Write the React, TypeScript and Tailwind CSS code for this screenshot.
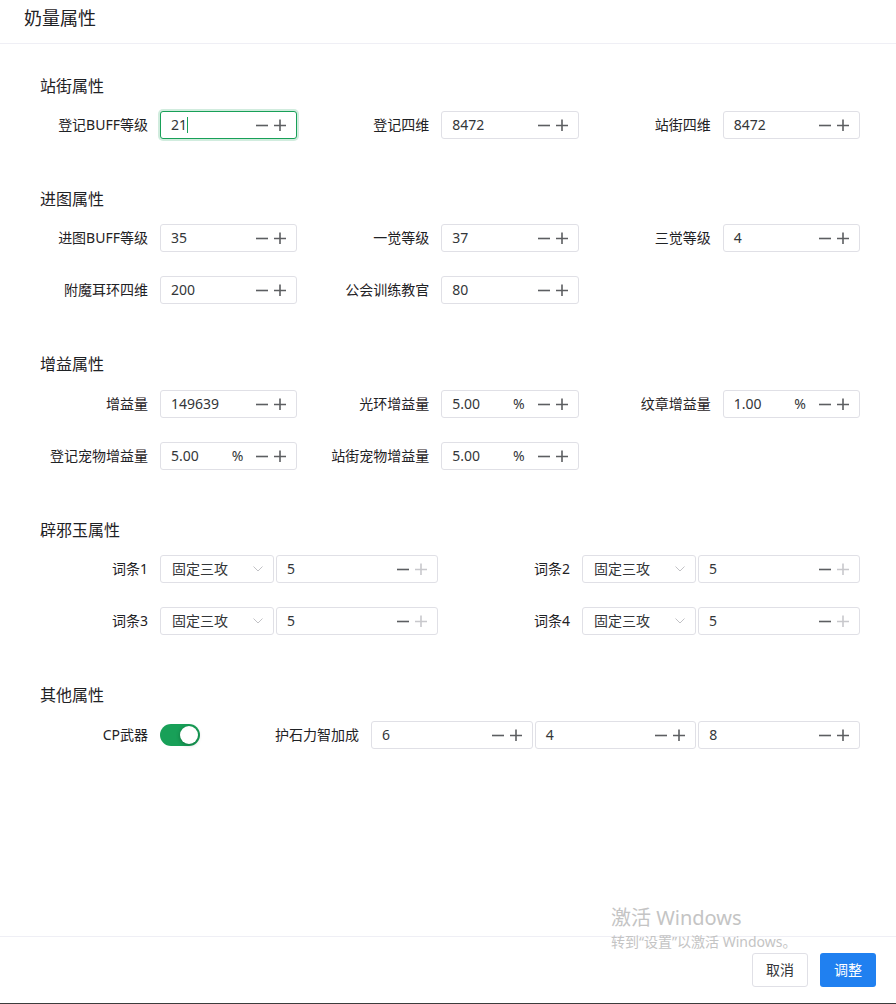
import React from "react";

const font = "font-['Noto_Sans','Noto_Sans_CJK_SC',sans-serif]";

function Minus({ disabled }: { disabled?: boolean }) {
  return (
    <span className="flex w-[18px] items-center justify-center">
      <svg width="12" height="12" viewBox="0 0 12 12">
        <path d="M0 6.5H12" stroke={disabled ? "#c8c8cc" : "#5c5e61"} strokeWidth="1.6" />
      </svg>
    </span>
  );
}

function Plus({ disabled }: { disabled?: boolean }) {
  return (
    <span className="flex w-[18px] items-center justify-center">
      <svg width="12" height="12" viewBox="0 0 12 12">
        <path d="M0 6.5H12M6 0.5V12.5" stroke={disabled ? "#c8c8cc" : "#5c5e61"} strokeWidth="1.6" />
      </svg>
    </span>
  );
}

function NumberInput({
  value,
  suffix,
  focused,
  maxed,
  className = "",
}: {
  value: string;
  suffix?: string;
  focused?: boolean;
  maxed?: boolean;
  className?: string;
}) {
  return (
    <div
      className={
        "flex h-7 min-w-0 items-center rounded-[3px] border bg-white pl-[10px] pr-[7px] text-sm text-[#333639] " +
        (focused
          ? "border-[#18a058] shadow-[0_0_0_2px_rgba(24,160,88,0.2)] "
          : "border-[#e0e0e6] ") +
        className
      }
    >
      <span className="flex flex-1 items-center leading-5">
        {value}
        {focused && <span className="inline-block h-4 w-px bg-[#18a058]" />}
      </span>
      {suffix && <span className="mr-[10px] leading-5">{suffix}</span>}
      <Minus />
      <Plus disabled={maxed} />
    </div>
  );
}

function Select({ value }: { value: string }) {
  return (
    <div className="flex h-7 w-[114px] shrink-0 items-center rounded-[3px] border border-[#e0e0e6] bg-white pl-[11px] pr-[10px] text-sm text-[#333639]">
      <span className="flex-1 leading-5">{value}</span>
      <svg width="10" height="6" viewBox="0 0 10 6">
        <path d="M0.5 0.5L5 5L9.5 0.5" fill="none" stroke="#c2c2c6" strokeWidth="1" />
      </svg>
    </div>
  );
}

function Field({ label, children }: { label: string; children: React.ReactNode }) {
  return (
    <div className="flex h-7 items-center">
      <div className="w-[144px] shrink-0 pr-3 text-right text-sm text-[#1f2225]">{label}</div>
      <div className="flex min-w-0 flex-1 gap-[2px]">{children}</div>
    </div>
  );
}

function Section({
  title,
  wide,
  children,
}: {
  title: string;
  wide?: boolean;
  children: React.ReactNode;
}) {
  return (
    <div>
      <div className={(wide ? "mb-[14px] " : "mb-[13px] ") + "pl-6 text-base leading-6 text-[#1f2225]"}>
        {title}
      </div>
      <div className="flex flex-col gap-6">{children}</div>
    </div>
  );
}

export default function App() {
  return (
    <div className={"relative flex h-[1004px] flex-col border-b border-[#3c3c3c] bg-white " + font}>
      <header className="h-[44px] shrink-0 border-b border-[#efeff5] pl-6 pt-[4px] text-lg leading-7 text-[#1f2225]">
        奶量属性
      </header>

      <main className="flex flex-1 flex-col gap-12 pl-4 pr-9 pt-[30px]">
        <Section title="站街属性">
          <div className="grid grid-cols-3">
            <Field label="登记BUFF等级">
              <NumberInput value="21" focused className="flex-1" />
            </Field>
            <Field label="登记四维">
              <NumberInput value="8472" className="flex-1" />
            </Field>
            <Field label="站街四维">
              <NumberInput value="8472" className="flex-1" />
            </Field>
          </div>
        </Section>

        <Section title="进图属性">
          <div className="grid grid-cols-3">
            <Field label="进图BUFF等级">
              <NumberInput value="35" className="flex-1" />
            </Field>
            <Field label="一觉等级">
              <NumberInput value="37" className="flex-1" />
            </Field>
            <Field label="三觉等级">
              <NumberInput value="4" className="flex-1" />
            </Field>
          </div>
          <div className="grid grid-cols-3">
            <Field label="附魔耳环四维">
              <NumberInput value="200" className="flex-1" />
            </Field>
            <Field label="公会训练教官">
              <NumberInput value="80" className="flex-1" />
            </Field>
          </div>
        </Section>

        <Section title="增益属性" wide>
          <div className="grid grid-cols-3">
            <Field label="增益量">
              <NumberInput value="149639" className="flex-1" />
            </Field>
            <Field label="光环增益量">
              <NumberInput value="5.00" suffix="%" className="flex-1" />
            </Field>
            <Field label="纹章增益量">
              <NumberInput value="1.00" suffix="%" className="flex-1" />
            </Field>
          </div>
          <div className="grid grid-cols-3">
            <Field label="登记宠物增益量">
              <NumberInput value="5.00" suffix="%" className="flex-1" />
            </Field>
            <Field label="站街宠物增益量">
              <NumberInput value="5.00" suffix="%" className="flex-1" />
            </Field>
          </div>
        </Section>

        <Section title="辟邪玉属性">
          <div className="grid grid-cols-2">
            <Field label="词条1">
              <Select value="固定三攻" />
              <NumberInput value="5" maxed className="flex-1" />
            </Field>
            <Field label="词条2">
              <Select value="固定三攻" />
              <NumberInput value="5" maxed className="flex-1" />
            </Field>
          </div>
          <div className="grid grid-cols-2">
            <Field label="词条3">
              <Select value="固定三攻" />
              <NumberInput value="5" maxed className="flex-1" />
            </Field>
            <Field label="词条4">
              <Select value="固定三攻" />
              <NumberInput value="5" maxed className="flex-1" />
            </Field>
          </div>
        </Section>

        <Section title="其他属性" wide>
          <div className="grid grid-cols-4">
            <Field label="CP武器">
              <div className="relative h-[22px] w-10 rounded-full bg-[#18a058]">
                <span className="absolute right-[2px] top-[2px] h-[18px] w-[18px] rounded-full bg-white shadow-[0_1px_4px_rgba(0,0,0,0.3)]" />
              </div>
            </Field>
            <div className="col-span-3">
              <Field label="护石力智加成">
                <NumberInput value="6" className="flex-1" />
                <NumberInput value="4" className="flex-1" />
                <NumberInput value="8" className="flex-1" />
              </Field>
            </div>
          </div>
        </Section>
      </main>

      <footer className="flex shrink-0 justify-end gap-3 border-t border-[#efeff5] px-5 py-4">
        <button className="h-[34px] rounded-[3px] border border-[#e0e0e6] bg-white px-[13px] text-sm text-[#333639]">
          取消
        </button>
        <button className="h-[34px] rounded-[3px] bg-[#2080f0] px-[14px] text-sm text-white">
          调整
        </button>
      </footer>

      <div className="pointer-events-none absolute left-[611px] top-[904px] text-[#c4c4c4]">
        <div className="text-xl leading-7">激活 Windows</div>
        <div className="text-sm leading-5">转到“设置”以激活 Windows。</div>
      </div>
    </div>
  );
}
